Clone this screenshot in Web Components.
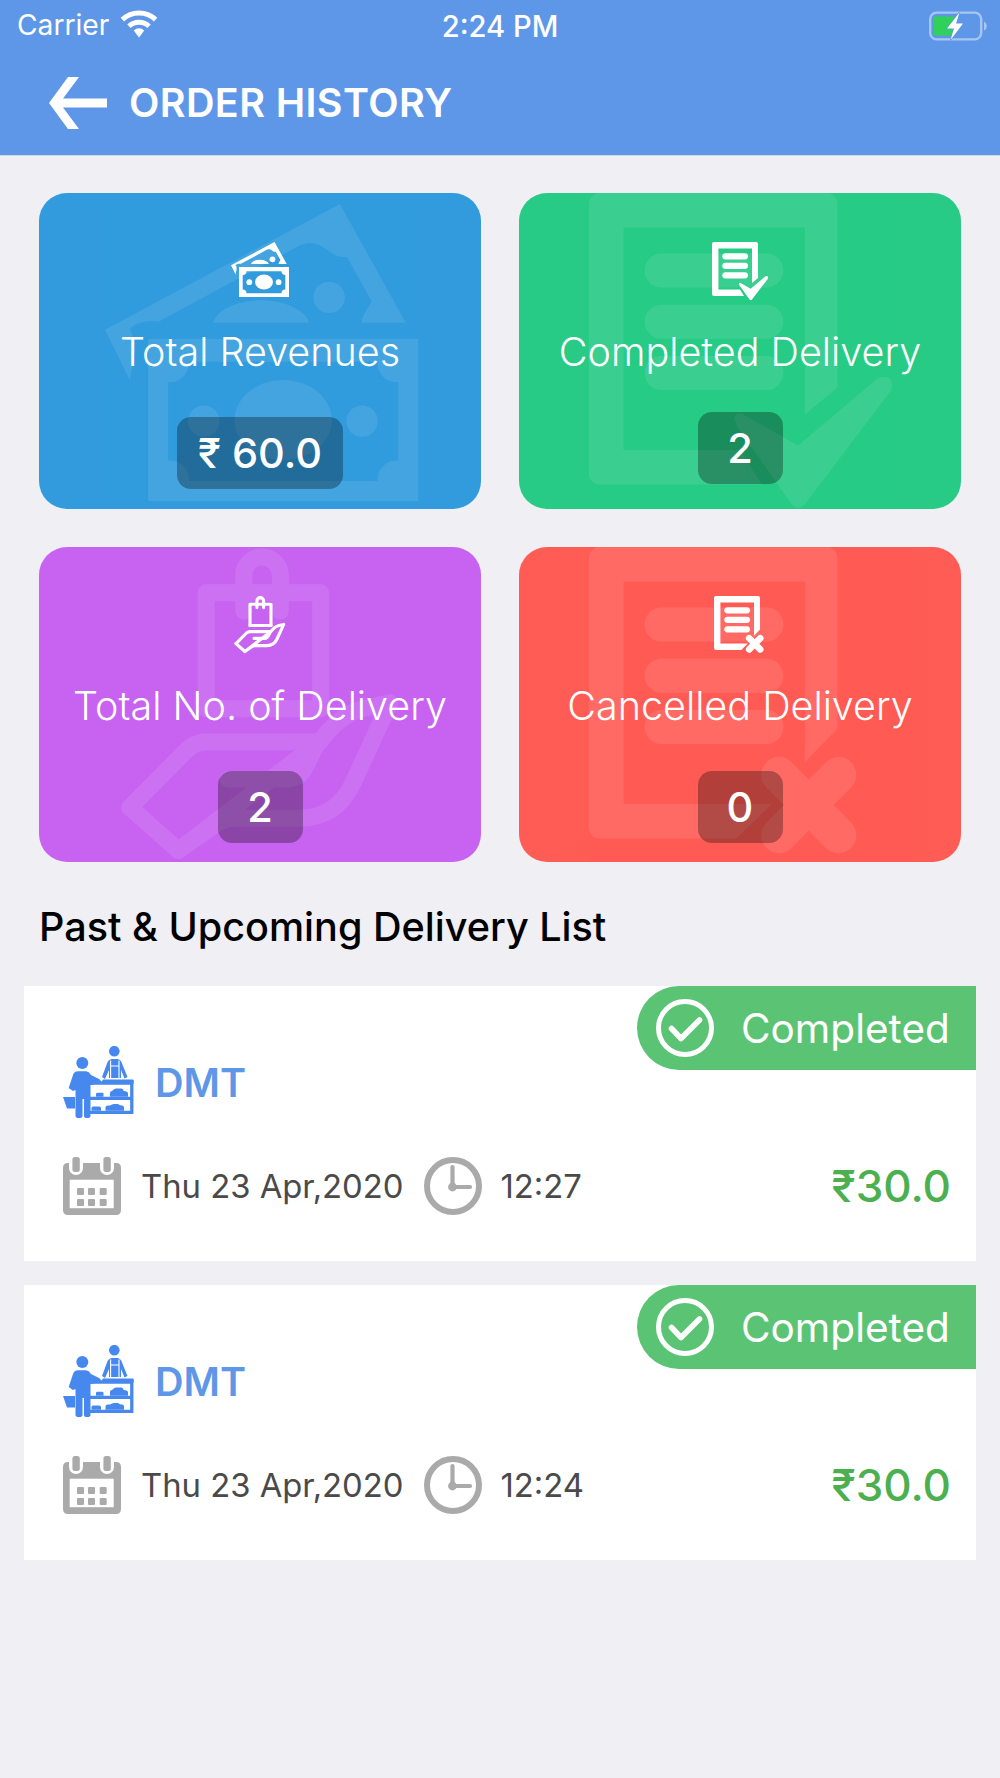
<!DOCTYPE html>
<html lang="en">
<head>
<meta charset="utf-8">
<title>Order History</title>
<style>
html,body{margin:0;padding:0;background:#efeff4;}
body{font-family:Inter,"Noto Sans",sans-serif;}
</style>
</head>
<body>
<order-app>
  <status-bar></status-bar>
  <app-header>ORDER HISTORY</app-header>
  <stat-grid>
    <stat-card icon="money" color="#319bdd" pill-gap="43"><span>Total Revenues</span><span slot="value">₹ 60.0</span></stat-card>
    <stat-card icon="check" color="#27cb85" pill-gap="38"><span>Completed Delivery</span><span slot="value">2</span></stat-card>
    <stat-card icon="hand" color="#c763f0" pill-gap="43"><span>Total No. of Delivery</span><span slot="value">2</span></stat-card>
    <stat-card icon="cross" color="#ff5c55" pill-gap="43"><span>Cancelled Delivery</span><span slot="value">0</span></stat-card>
  </stat-grid>
  <section-title>Past &amp; Upcoming Delivery List</section-title>
  <delivery-list>
    <delivery-card name="DMT" date="Thu 23 Apr,2020" time="12:27" price="₹30.0" status="Completed"></delivery-card>
    <delivery-card name="DMT" date="Thu 23 Apr,2020" time="12:24" price="₹30.0" status="Completed"></delivery-card>
  </delivery-list>
</order-app>
<script>
const docPath = n => `M2 0H44a2 2 0 0 1 2 2V${n.a}L40 ${n.b}V6.4H6.4V47.6H${n.c}L${n.d} 54H2a2 2 0 0 1-2-2V2a2 2 0 0 1 2-2Z`;
const docLines = `<rect x="10.3" y="11.2" width="25.7" height="6.3" rx="3.15"/><rect x="10.3" y="20.7" width="25.7" height="6.3" rx="3.15"/><rect x="10.3" y="30.2" width="25.7" height="6.3" rx="3.15"/>`;
const ICONS = {
  money:{w:58,h:56,wmx:65.8,wmy:10.7,s:5.4,art:`
    <path fill-rule="evenodd" d="M43.5 0L55.7 22H47.5C47.7 20.5 48.6 19.5 49.4 18L44.8 9.8C43 10 42 9.2 41 8.4C39.5 7.2 38 7 36.2 7.6L9.9 21.8C8.5 21.4 6 21.8 4.7 23C4.6 23.4 5.2 24.6 5.6 25.2V27L4.6 32.6L0 23.3Z"/>
    <path d="M20 22A9 4.9 0 0 1 37.8 22Z"/><circle cx="41.5" cy="17.3" r="2.9"/>
    <path fill-rule="evenodd" d="M8 25H58V55H8ZM15.5 29.2H50.5A3.5 3.5 0 0 0 54.3 33V47.5A3.5 3.5 0 0 0 50.5 51.3H15.5A3.5 3.5 0 0 0 11.7 47.5V33A3.5 3.5 0 0 0 15.5 29.2Z"/>
    <ellipse cx="33" cy="40" rx="9" ry="7.4"/><circle cx="18.3" cy="40.2" r="2.9"/><circle cx="47.6" cy="40.2" r="2.9"/>`},
  check:{w:56,h:59,wmx:70,wmy:0,s:5.4,art:`
    <path d="${docPath({a:36,b:41,c:28,d:32})}"/>${docLines}
    <path d="M27 41.8Q27 40.4 28.6 41L38.7 46.8L53.5 34.3Q56.6 33.4 56 36.5L40 57.6Q38.7 59 37.5 57.6L27.4 43.2Z"/>`},
  cross:{w:52,h:58,wmx:70,wmy:0,s:5.4,art:`
    <path d="${docPath({a:33.6,b:39.8,c:33.8,d:27.3})}"/>${docLines}
    <path d="M35.2 42.2L46.2 53.4M46.2 42.2L35.2 53.4" fill="none" stroke="#fff" stroke-width="6.6" stroke-linecap="round"/>`},
  hand:{w:52,h:58,wmx:80,wmy:1,s:5.45,art:`
    <g fill="none" stroke="#fff" stroke-width="3.1" stroke-linejoin="round" stroke-linecap="round">
      <path d="M22.9 11.6V5a3.35 3.35 0 0 1 6.7 0V11.6"/>
      <path d="M16 29.5V8.2H37V29.5"/>
      <path d="M16 29.5H37"/>
      <path d="M2 47.6L12.5 37Q14 35.6 16 35.6H36.5L34.2 40.2Q33.2 42.4 30.5 42.4H20"/>
      <path d="M37 35.4Q40.5 30.5 45 29.4L49.7 28.4L43 43Q40 49.6 33 49.6H21.5Q19 49.6 17 51.2L10.9 55.5Z"/>
      <path d="M2 47.6L10.9 55.5"/>
    </g>`}
};
function def(name, css, html, extra={}){
  const t=document.createElement('template');
  t.innerHTML=`<style>${css}</style>${html}`;
  customElements.define(name,class extends HTMLElement{
    constructor(){super();this.attachShadow({mode:'open'}).appendChild(t.content.cloneNode(true));}
    connectedCallback(){ if(extra.init) extra.init.call(this,this.shadowRoot); }
  });
}
def('order-app',`:host{display:flex;flex-direction:column;width:1000px;min-height:1778px;background:#efeff4;color:#000;font-family:Inter,"Noto Sans",sans-serif;}`,`<slot></slot>`);

def('status-bar',`
:host{display:flex;align-items:center;height:51px;background:#5f97e8;color:#fff;padding:0 12px 0 17px;position:relative;box-sizing:border-box;}
.c{font-size:28.2px;font-weight:400;line-height:53px;}
.w{margin-left:11px;margin-top:-3px;display:block;}
.t{position:absolute;left:0;right:0;top:0;text-align:center;font-size:29.2px;font-weight:500;line-height:53px;}
.b{margin-left:auto;display:block;}
`,`<span class="c">Carrier</span>
<svg class="w" width="38" height="28" viewBox="0 0 38 28"><g fill="none" stroke="#fff" stroke-width="5"><path d="M2.4 9.6A24 24 0 0 1 35.6 9.6"/><path d="M9 16.2A14.6 14.6 0 0 1 29 16.2"/></g><path d="M13.8 20.4A7.6 7.6 0 0 1 24.2 20.4L19 27.4Z" fill="#fff"/></svg>
<span class="t">2:24 PM</span>
<svg class="b" width="59" height="30" viewBox="0 0 59 30"><rect x="1.2" y="1.6" width="51" height="26.8" rx="6.5" fill="none" stroke="#fff" stroke-opacity=".45" stroke-width="2.4"/><path d="M55 10.5a5 5 0 0 1 0 9Z" fill="#fff" fill-opacity=".45"/><path d="M6.5 5.5H26V24.5H6.5a2 2 0 0 1-2-2V7.5a2 2 0 0 1 2-2Z" fill="#30d158"/><path d="M30.5 1.5L18 17.5H25L21.5 29L34 12.5H27Z" fill="#fff" stroke="#5f97e8" stroke-width="1.4" paint-order="stroke"/></svg>`);

def('app-header',`
:host{display:flex;align-items:center;height:104px;background:#5f97e8;color:#fff;box-sizing:border-box;padding:0 0 1px 49px;box-shadow:0 1px 0 #d6d6da;font-size:39.5px;font-weight:600;letter-spacing:.4px;position:relative;}
svg{display:block;margin-right:22px;}
span{line-height:1;padding-top:2px;}
`,`<svg width="58" height="52" viewBox="0 0 58 52"><path d="M0 26L19 0H30L14 21.5H58V30.5H14L30 52H19Z" fill="#fff"/></svg><span><slot></slot></span>`);

def('stat-grid',`:host{display:grid;grid-template-columns:442px 442px;grid-template-rows:316px 315px;gap:38px;padding:38px 39px 0;}`,`<slot></slot>`);

def('stat-card',`
:host{display:block;position:relative;height:100%;border-radius:28px;overflow:hidden;color:#fff;}
.wm{position:absolute;overflow:visible;opacity:.09;}
.body{position:relative;display:flex;flex-direction:column;align-items:center;padding-top:49px;}
.ico{height:57px;display:flex;align-items:flex-start;}
.ico svg{display:block;overflow:visible;}
.label{margin-top:31px;font-size:39.5px;font-weight:300;line-height:44px;white-space:nowrap;}
.pill{display:block;box-sizing:border-box;padding:0 21px;min-width:85px;height:72px;line-height:72px;border-radius:14px;background:rgba(0,0,0,.3);text-align:center;font-size:41.5px;font-weight:500;white-space:nowrap;}
`,`<svg class="wm" fill="#fff"></svg><div class="body"><div class="ico"><svg class="sm" fill="#fff"></svg></div><div class="label"><slot></slot></div><div class="pill"><slot name="value"></slot></div></div>`,
{init(r){
  const ic=ICONS[this.getAttribute('icon')];
  this.style.background=this.getAttribute('color');
  const sm=r.querySelector('.sm');
  sm.setAttribute('width',ic.w);sm.setAttribute('height',ic.h);sm.setAttribute('viewBox',`0 0 ${ic.w} ${ic.h}`);sm.innerHTML=ic.art;
  const wm=r.querySelector('.wm');
  wm.setAttribute('width',ic.w*ic.s);wm.setAttribute('height',ic.h*ic.s);wm.setAttribute('viewBox',`0 0 ${ic.w} ${ic.h}`);
  wm.style.left=ic.wmx+'px';wm.style.top=ic.wmy+'px';wm.innerHTML=ic.art;
  r.querySelector('.pill').style.marginTop=this.getAttribute('pill-gap')+'px';
}});

def('section-title',`:host{display:block;padding:42px 0 0 39px;font-size:39.6px;font-weight:500;line-height:46px;height:82px;box-sizing:content-box;white-space:nowrap;}`,`<slot></slot>`);

def('delivery-list',`:host{display:flex;flex-direction:column;gap:24px;padding:0 24px;}`,`<slot></slot>`);

def('delivery-card',`
:host{display:block;position:relative;height:275px;background:#fff;}
.badge{position:absolute;top:0;right:0;width:339px;height:84px;box-sizing:border-box;background:#5bc374;border-radius:42px 0 0 42px;display:flex;align-items:center;color:#fff;padding-left:19px;font-size:40.5px;font-weight:400;}
.badge svg{display:block;margin-right:27px;}
.col{display:flex;flex-direction:column;padding:60px 25px 0 39px;gap:39px;}
.shop{display:flex;align-items:center;height:72px;color:#5f97e8;font-size:39.5px;font-weight:600;}
.shop svg{display:block;margin-right:21px;}
.shop span{padding-top:2px;}
.meta{display:flex;align-items:center;height:58px;color:#4a4a4a;font-size:32.8px;font-weight:400;}
.meta svg{display:block;}
.date{margin-left:20px;margin-right:20px;white-space:nowrap;}
.time{margin-left:19px;}
.price{margin-left:auto;color:#4caf50;font-size:44px;font-weight:500;}
`,`<div class="col">
  <div class="shop">
    <svg width="71" height="72" viewBox="0 0 71 72" fill="#4688ee">
      <circle cx="19.3" cy="17" r="6"/>
      <path d="M5.7 42L10 29Q11 25.5 15 25.2H23Q26 25.5 28 29L36 33Q39 35 37.5 37.2L27.5 39V70Q27.5 72 24.2 72Q21 72 21 70V53H19.5V70Q19.5 72 16 72Q12.5 72 12.5 70V44L10 45Z"/>
      <path d="M0 51H12V62.5H4Z"/>
      <circle cx="51.3" cy="5.2" r="5.3"/>
      <path d="M39 31L44 17.5Q45 13.5 49 13H54.5Q58 13.5 59 17.5L64.5 31L61.5 32.5L58 24V32H46V24L42 33Z"/>
      <path d="M47.6 14.5V32M56 14.5V32M47.6 20H56" fill="none" stroke="#fff" stroke-width="1.1"/>
      <rect x="39.3" y="33.5" width="31.4" height="4.6" rx="1"/>
      <path d="M27 37H68.8V66.4H27M27 52.3H69" fill="none" stroke="#4688ee" stroke-width="3.3"/>
      <path d="M33 50.7V48Q33 46.7 34.5 46.7H39Q40.5 46.7 40.5 48V50.7ZM47 50.7V47Q47 45 49 45Q51 42.5 53 42.5H58Q60.5 42.5 60.5 45Q65 45 65 47.5V50.7ZM28.5 64.8V62Q28.5 60.5 30 60.5H36Q38 60.5 38 62V64.8ZM42.5 64.8V61.5Q42.5 59.5 45 59.5H47Q49 58 51 58H55Q57 59.5 59 59.5Q61 59.5 61 61.5V64.8Z"/>
    </svg>
    <span class="n"></span>
  </div>
  <div class="meta">
    <svg width="58" height="58" viewBox="0 0 58 58">
      <path d="M5 6H53Q58 6 58 11V53Q58 58 53 58H5Q0 58 0 53V11Q0 6 5 6Z" fill="#aaa"/>
      <rect x="6.7" y="22.7" width="44" height="28.5" fill="#fff"/>
      <rect x="6" y="-2" width="14" height="20" rx="7" fill="#fff"/><rect x="37" y="-2" width="14" height="20" rx="7" fill="#fff"/>
      <rect x="9.4" y="0" width="7.4" height="15" rx="2.5" fill="#aaa"/><rect x="40.4" y="0" width="7.4" height="15" rx="2.5" fill="#aaa"/>
      <g fill="#aaa"><rect x="14" y="31" width="7" height="7" rx="1"/><rect x="25" y="31" width="7" height="7" rx="1"/><rect x="36.7" y="31" width="7" height="7" rx="1"/><rect x="14" y="42" width="7" height="7" rx="1"/><rect x="25" y="42" width="7" height="7" rx="1"/><rect x="36.7" y="42" width="7" height="7" rx="1"/></g>
    </svg>
    <span class="date"></span>
    <svg width="58" height="58" viewBox="0 0 58 58"><circle cx="29" cy="29" r="26" fill="none" stroke="#aaa" stroke-width="6"/><path d="M28.5 10V30H46" fill="none" stroke="#aaa" stroke-width="4.2" stroke-linecap="round" stroke-linejoin="round"/><circle cx="28.5" cy="30" r="4.4" fill="#aaa"/></svg>
    <span class="time"></span>
    <span class="price"></span>
  </div>
</div>
<div class="badge">
  <svg width="58" height="58" viewBox="0 0 58 58"><circle cx="29" cy="29" r="26.5" fill="none" stroke="#fff" stroke-width="5"/><path d="M15.5 29.5L25 39.5L43.5 21" fill="none" stroke="#fff" stroke-width="5.6" stroke-linecap="round" stroke-linejoin="round"/></svg>
  <span class="s"></span>
</div>`,
{init(r){
  r.querySelector('.n').textContent=this.getAttribute('name');
  r.querySelector('.date').textContent=this.getAttribute('date');
  r.querySelector('.time').textContent=this.getAttribute('time');
  r.querySelector('.price').textContent=this.getAttribute('price');
  r.querySelector('.s').textContent=this.getAttribute('status');
}});
</script>
</body>
</html>
